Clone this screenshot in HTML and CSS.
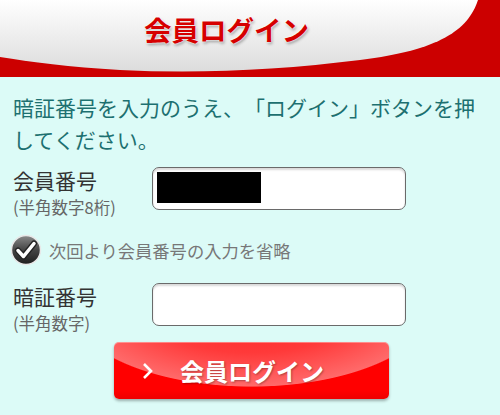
FILE: index.html
```html
<!DOCTYPE html>
<html lang="ja">
<head>
    <meta charset="UTF-8">
    <title>会員ログイン</title>
    <link rel="stylesheet" href="styles.css">
</head>
<body>
    <div class="header">
        <svg class="header-bg" width="500" height="77" viewBox="0 0 500 77">
            <defs>
                <linearGradient id="hdrGrad" x1="0" y1="0" x2="0" y2="1">
                    <stop offset="0" stop-color="#ffffff"/>
                    <stop offset="1" stop-color="#dcdcdc"/>
                </linearGradient>
            </defs>
            <rect width="500" height="77" fill="#cc0000"/>
            <path d="M0 0 H478 C468 30 440 50 360 60 C280 70 200 74 120 70 C70 67 30 62 0 57 Z" fill="url(#hdrGrad)"/>
        </svg>
        <h1>会員ログイン</h1>
    </div>
    <form class="login-form">
        <p class="intro">暗証番号を入力のうえ、「ログイン」ボタンを押してください。</p>
        <div class="field">
            <label class="field-label">
                <span class="name">会員番号</span>
                <span class="sub">(半角数字8桁)</span>
            </label>
            <div class="input-box">
                <span class="redacted"></span>
            </div>
        </div>
        <div class="remember">
            <svg class="check" width="32" height="32" viewBox="0 0 32 32">
                <defs>
                    <linearGradient id="chkGrad" x1="0" y1="0" x2="0" y2="1">
                        <stop offset="0" stop-color="#8a8a8a"/>
                        <stop offset="0.5" stop-color="#444"/>
                        <stop offset="1" stop-color="#1e1e1e"/>
                    </linearGradient>
                </defs>
                <circle cx="16" cy="16" r="14.5" fill="url(#chkGrad)" stroke="#e8e8e8" stroke-width="1.5"/>
                <path d="M8 16.5 L13.5 22.5 L24 9.5" fill="none" stroke="#222" stroke-width="6" stroke-linecap="round" stroke-linejoin="round"/>
                <path d="M8 16.5 L13.5 22.5 L24 9.5" fill="none" stroke="#fff" stroke-width="3.5" stroke-linecap="round" stroke-linejoin="round"/>
            </svg>
            <span>次回より会員番号の入力を省略</span>
        </div>
        <div class="field field-pin">
            <label class="field-label">
                <span class="name">暗証番号</span>
                <span class="sub">(半角数字)</span>
            </label>
            <div class="input-box"></div>
        </div>
        <button type="button" class="login-btn">
            <svg class="chevron" width="12" height="18" viewBox="0 0 12 18">
                <path d="M2 2 L9 9 L2 16" fill="none" stroke="#fff" stroke-width="2.6"/>
            </svg>
            <span>会員ログイン</span>
        </button>
    </form>
</body>
</html>
```

FILE: styles.css
```css
body {
    margin: 0;
    background: #dcfbf7;
    font-family: "Noto Sans CJK JP", "Noto Sans", sans-serif;
    text-spacing-trim: space-all;
    width: 500px;
    height: 415px;
    overflow: hidden;
}
.header {
    position: relative;
    height: 77px;
}
.header-bg {
    position: absolute;
    top: 0;
    left: 0;
}
.header h1 {
    position: relative;
    margin: 0;
    padding: 11px 0 0 144px;
    font-size: 27.5px;
    line-height: 36px;
    font-weight: 700;
    color: #d60000;
    text-shadow: 0 0 2px #fff, 0 0 2px #fff, 1px 2px 3px rgba(0, 0, 0, 0.35);
}
.login-form {
    padding: 0 10px 0 13px;
}
.intro {
    margin: 14px 0 0;
    font-size: 21px;
    line-height: 32px;
    color: #1d7070;
}
.field {
    display: flex;
    margin-top: 12px;
}
.field-pin {
    margin-top: 17px;
}
.field-label {
    width: 139px;
    display: flex;
    flex-direction: column;
}
.name {
    font-size: 21px;
    line-height: 26px;
    color: #333;
}
.sub {
    font-size: 16.5px;
    line-height: 28px;
    color: #666;
}
.input-box {
    width: 244px;
    height: 33px;
    padding: 4px;
    background: #fff;
    border: 1.5px solid #6a6a6a;
    border-radius: 7px;
    box-shadow: inset 0 2px 2px rgba(0, 0, 0, 0.15);
}
.redacted {
    display: block;
    width: 104px;
    height: 31px;
    background: #000;
}
.remember {
    display: flex;
    align-items: center;
    gap: 7px;
    margin-top: 13px;
    margin-left: -3px;
    font-size: 17.3px;
    color: #777;
}
.login-btn {
    display: flex;
    align-items: center;
    width: 275px;
    height: 57px;
    margin: 5px auto 0;
    padding: 0 0 0 28px;
    border: none;
    border-radius: 5px;
    background:
        radial-gradient(185px 85px at 50% -40px, #ff1e1e 0%, #ff3a3a 60%, #ff6a6a 99%, rgba(255, 0, 0, 0) 100%),
        linear-gradient(#ff0000, #ff0000 85%, #ee0000);
    box-shadow: inset 0 1px 0 rgba(255, 255, 255, 0.35), 0 2px 3px rgba(0, 0, 0, 0.3);
    font-family: inherit;
    font-size: 24px;
    font-weight: 700;
    color: #fff;
    text-shadow: 1px 1px 2px rgba(0, 0, 0, 0.3);
}
.login-btn span {
    margin-left: 26px;
}
```
